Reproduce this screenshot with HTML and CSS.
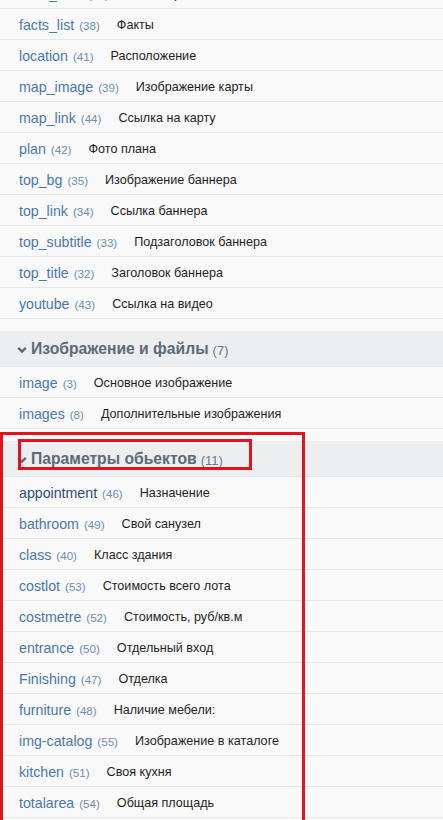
FILE: index.html
```html
<!DOCTYPE html>
<html lang="ru">
<head>
<meta charset="utf-8">
<title>Поля</title>
<link rel="stylesheet" href="styles.css">
</head>
<body>
<div class="fields">
  <section class="group">
    <ul class="rows">
      <li class="row"><a class="name">facts_icon</a><span class="count">(37)</span><span class="desc">Иконки фактов</span></li>
      <li class="row"><a class="name">facts_list</a><span class="count">(38)</span><span class="desc">Факты</span></li>
      <li class="row"><a class="name">location</a><span class="count">(41)</span><span class="desc">Расположение</span></li>
      <li class="row"><a class="name">map_image</a><span class="count">(39)</span><span class="desc">Изображение карты</span></li>
      <li class="row"><a class="name">map_link</a><span class="count">(44)</span><span class="desc">Ссылка на карту</span></li>
      <li class="row"><a class="name">plan</a><span class="count">(42)</span><span class="desc">Фото плана</span></li>
      <li class="row"><a class="name">top_bg</a><span class="count">(35)</span><span class="desc">Изображение баннера</span></li>
      <li class="row"><a class="name">top_link</a><span class="count">(34)</span><span class="desc">Ссылка баннера</span></li>
      <li class="row"><a class="name">top_subtitle</a><span class="count">(33)</span><span class="desc">Подзаголовок баннера</span></li>
      <li class="row"><a class="name">top_title</a><span class="count">(32)</span><span class="desc">Заголовок баннера</span></li>
      <li class="row"><a class="name">youtube</a><span class="count">(43)</span><span class="desc">Ссылка на видео</span></li>
    </ul>
  </section>

  <section class="group">
    <h3 class="group-head">
      <svg class="chev" width="10" height="8" viewBox="0 0 10 8"><path d="M1.2 1.8 L5 5.6 L8.8 1.8" fill="none" stroke="currentColor" stroke-width="2.4"/></svg>
      <span class="group-title">Изображение и файлы</span><span class="group-count">(7)</span>
    </h3>
    <ul class="rows">
      <li class="row"><a class="name">image</a><span class="count">(3)</span><span class="desc">Основное изображение</span></li>
      <li class="row"><a class="name">images</a><span class="count">(8)</span><span class="desc">Дополнительные изображения</span></li>
    </ul>
  </section>

  <section class="group">
    <h3 class="group-head">
      <svg class="chev" width="10" height="8" viewBox="0 0 10 8"><path d="M1.2 1.8 L5 5.6 L8.8 1.8" fill="none" stroke="currentColor" stroke-width="2.4"/></svg>
      <span class="group-title">Параметры обьектов</span><span class="group-count">(11)</span>
    </h3>
    <ul class="rows">
      <li class="row"><a class="name name-active">appointment</a><span class="count">(46)</span><span class="desc">Назначение</span></li>
      <li class="row"><a class="name">bathroom</a><span class="count">(49)</span><span class="desc">Свой санузел</span></li>
      <li class="row"><a class="name">class</a><span class="count">(40)</span><span class="desc">Класс здания</span></li>
      <li class="row"><a class="name">costlot</a><span class="count">(53)</span><span class="desc">Стоимость всего лота</span></li>
      <li class="row"><a class="name">costmetre</a><span class="count">(52)</span><span class="desc">Стоимость, руб/кв.м</span></li>
      <li class="row"><a class="name">entrance</a><span class="count">(50)</span><span class="desc">Отдельный вход</span></li>
      <li class="row"><a class="name">Finishing</a><span class="count">(47)</span><span class="desc">Отделка</span></li>
      <li class="row"><a class="name">furniture</a><span class="count">(48)</span><span class="desc">Наличие мебели:</span></li>
      <li class="row"><a class="name">img-catalog</a><span class="count">(55)</span><span class="desc">Изображение в каталоге</span></li>
      <li class="row"><a class="name">kitchen</a><span class="count">(51)</span><span class="desc">Своя кухня</span></li>
      <li class="row"><a class="name">totalarea</a><span class="count">(54)</span><span class="desc">Общая площадь</span></li>
      <li class="row"><a class="name">undergroundparking</a><span class="count">(56)</span><span class="desc">Подземный паркинг</span></li>
    </ul>
  </section>
</div>

<!-- highlight frames drawn over the third group -->
<div class="mark mark-group"></div>
<div class="mark mark-title"></div>
</body>
</html>
```

FILE: styles.css
```css
html, body {
  margin: 0;
  padding: 0;
  background: #f9f9f9;
  font-family: "Liberation Sans", Arial, sans-serif;
  overflow: hidden;
}

.fields {
  margin-top: -22px;
}

.group {
  margin-bottom: 12px;
}

.rows {
  list-style: none;
  margin: 0;
  padding: 0;
}

.row {
  box-sizing: border-box;
  height: 31px;
  padding-top: 2px;
  border-bottom: 1px solid #e7e7e7;
  display: flex;
  align-items: center;
  padding-left: 19px;
  white-space: nowrap;
}

.name {
  font-size: 14.2px;
  color: #4a78a9;
  text-decoration: none;
}

.name-active {
  color: #2b4d72;
}

.count {
  font-size: 11.6px;
  color: #6f8eae;
  margin-left: 5px;
}

.desc {
  font-size: 12.6px;
  color: #1e1e1e;
  margin-left: 17px;
}

.group-head {
  margin: 0;
  box-sizing: border-box;
  height: 36px;
  padding-top: 1px;
  background: #eceeef;
  border-bottom: 1px solid #e2e4e5;
  display: flex;
  align-items: center;
  padding-left: 17px;
  color: #5d6a77;
}

.chev {
  margin-right: 4px;
  margin-top: 1px;
}

.group-title {
  font-size: 15.7px;
  font-weight: bold;
}

.group-count {
  font-size: 13px;
  font-weight: normal;
  color: #6c7884;
  margin-left: 4px;
  margin-top: 2px;
}

.mark {
  position: absolute;
  border: 3px solid #e0141a;
  box-sizing: border-box;
}

.mark-group {
  left: 0;
  top: 432px;
  width: 305px;
  height: 420px;
}

.mark-title {
  left: 18px;
  top: 439px;
  width: 234px;
  height: 31px;
}
```
